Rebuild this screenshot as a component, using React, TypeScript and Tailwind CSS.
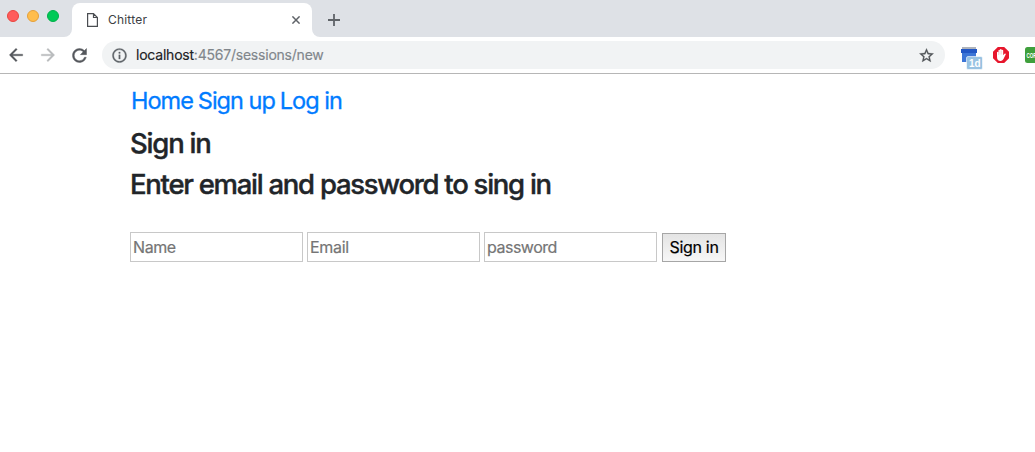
import React from 'react';
import { MdArrowBack, MdArrowForward, MdRefresh, MdStarBorder, MdInfoOutline } from 'react-icons/md';

function TabStrip() {
  return (
    <div className="flex h-[37px] bg-[#dee1e6]">
      <div className="flex w-16 shrink-0 gap-2 pl-[7px] pt-[10px]">
        <span className="h-3 w-3 shrink-0 rounded-full border border-[#e9453f] bg-[#ff5c5c]" />
        <span className="h-3 w-3 shrink-0 rounded-full border border-[#e5a03a] bg-[#ffbd4c]" />
        <span className="h-3 w-3 shrink-0 rounded-full border border-[#00b04a] bg-[#00ca56]" />
      </div>
      <div className="flex w-2 items-end bg-white">
        <div className="h-full w-2 rounded-br-lg bg-[#dee1e6]" />
      </div>
      <div className="flex h-full w-60 flex-col bg-[#dee1e6] pt-[3px]">
        <div className="flex flex-1 items-center rounded-t-lg bg-white pl-[15px] pr-3">
          <svg width="11" height="14" viewBox="0 0 11 14" fill="none" stroke="#4a4d51" strokeWidth="1.2">
            <path d="M.6.6H6.5L10.4 4.5V13.4H.6ZM6.5.6V4.5H10.4" />
          </svg>
          <span className="ml-2.5 flex-1 text-xs tracking-[0.2px] text-[#3c4043]">Chitter</span>
          <svg width="8" height="8" viewBox="0 0 8 8" fill="none" stroke="#5f6368" strokeWidth="1.5">
            <path d="M.4.4L7.6 7.6M7.6.4L.4 7.6" />
          </svg>
        </div>
      </div>
      <div className="w-2 bg-white">
        <div className="h-full w-2 rounded-bl-lg bg-[#dee1e6]" />
      </div>
      <div className="flex h-10 items-center pl-2">
        <svg width="12" height="12" viewBox="0 0 12 12" fill="none" stroke="#5f6368" strokeWidth="1.8">
          <path d="M6 0V12M0 6H12" />
        </svg>
      </div>
    </div>
  );
}

function Toolbar() {
  return (
    <div className="flex h-[37px] items-center overflow-hidden border-b border-[#b6b6b6] bg-white pl-1.5">
      <MdArrowBack size={20} color="#54575c" className="shrink-0 [&_path:last-child]:stroke-[#54575c] [&_path:last-child]:[stroke-width:0.4px]" />
      <MdArrowForward size={20} color="#b9bbbd" className="ml-3 shrink-0 [&_path:last-child]:stroke-[#b9bbbd] [&_path:last-child]:[stroke-width:0.4px]" />
      <MdRefresh size={21} color="#54575c" className="ml-[11px] shrink-0 [&_path:last-child]:stroke-[#54575c] [&_path:last-child]:[stroke-width:0.5px]" />
      <div className="ml-3 flex h-7 w-[843px] shrink-0 items-center rounded-full bg-[#f1f3f4] pl-[9px] pr-2.5">
        <MdInfoOutline size={17} color="#5f6368" className="[&_path:last-child]:stroke-[#5f6368] [&_path:last-child]:[stroke-width:0.4px]" />
        <span className="ml-2 flex-1 text-sm tracking-[-0.22px] text-[#202124] [-webkit-text-stroke:0.15px]">
          localhost<span className="text-[#80868b]">:4567/sessions/new</span>
        </span>
        <MdStarBorder size={17} color="#4f5357" className="[&_path:last-child]:stroke-[#4f5357] [&_path:last-child]:[stroke-width:0.4px]" />
      </div>
      <svg className="ml-4 mt-[7px] shrink-0" width="22" height="24" viewBox="0 0 22 24">
        <path d="M1 0H15V3H1Z" fill="#aeb3bb" />
        <path d="M0 2H16V6H0Z" fill="#2257c5" />
        <path d="M1 6H15V15H1Z" fill="#3c75d6" />
        <rect x="5.5" y="9.5" width="16" height="13" rx="1.5" fill="#98c2e2" stroke="#fff" strokeWidth=".6" />
        <text x="13.8" y="20" textAnchor="middle" fill="#fff" fontFamily="Liberation Sans, sans-serif" fontSize="10" fontWeight="700">1d</text>
      </svg>
      <svg className="ml-2.5 shrink-0" width="16" height="16" viewBox="0 0 16 16">
        <path d="M4.8 0H11.2L16 4.8V11.2L11.2 16H4.8L0 11.2V4.8Z" fill="#e7162c" />
        <path d="M4 5.2Q4.9 4.3 5.5 5.2V3.2Q6.3 2.3 7 3.2V2.4Q7.8 1.5 8.6 2.4V3Q9.4 2.3 10.2 3.2V8.2L11.5 6.8Q12.7 6 12.8 7.2L10.5 12.1Q9.7 14 7.7 13.9Q4 14 4 10Z" fill="#fff" />
        <path d="M5.5 5V8M7 3.5V7.5M8.6 3.5V7.5" stroke="#efa0a6" strokeWidth=".4" />
      </svg>
      <svg className="ml-4 shrink-0" width="16" height="16" viewBox="0 0 16 16">
        <rect width="16" height="16" rx="2.5" fill="#3f9f3c" />
        <text x="1.5" y="10.5" textLength="13" lengthAdjust="spacingAndGlyphs" fill="#fff" fontFamily="Liberation Sans, sans-serif" fontSize="7.5" fontWeight="700">CORS</text>
      </svg>
    </div>
  );
}

const field = 'h-[30px] w-[173px] border border-[#c8c8c8] bg-white px-0.5 text-base outline-none [-webkit-text-stroke:0.2px] placeholder:text-[#757575]';

export default function App() {
  return (
    <div className="h-[452px] overflow-hidden bg-white font-['Inter',sans-serif]">
      <TabStrip />
      <Toolbar />
      <main className="pl-[130px]">
        <nav className="flex h-[54px] gap-[5px] pl-px pt-[9px] text-[23.5px] leading-9 tracking-[-1px] text-[#007bff] [-webkit-text-stroke:0.3px]">
          <a>Home</a>
          <a>Sign up</a>
          <a>Log in</a>
        </nav>
        <h3 className="h-[41px] text-[27.5px] font-medium leading-[30px] tracking-[-1.2px] text-[#212529] [-webkit-text-stroke:0.4px]">Sign in</h3>
        <h3 className="h-[63px] whitespace-nowrap text-[27.5px] font-medium leading-[30px] tracking-[-1.27px] text-[#212529] [-webkit-text-stroke:0.4px]">Enter email and password to sing in</h3>
        <form className="flex gap-1" onSubmit={(e) => e.preventDefault()}>
          <input className={`${field} tracking-[-0.4px]`} placeholder="Name" />
          <input className={`${field} tracking-[-0.3px]`} placeholder="Email" />
          <input className={`${field} tracking-[-0.5px]`} placeholder="password" />
          <button className="ml-px mt-px h-[29px] w-16 whitespace-nowrap border border-[#a6a6a6] bg-linear-to-b from-[#e4e4e4] to-[#f7f7f7] pb-0.5 text-base leading-none tracking-[-0.3px] text-black [-webkit-text-stroke:0.2px]">Sign in</button>
        </form>
      </main>
    </div>
  );
}
